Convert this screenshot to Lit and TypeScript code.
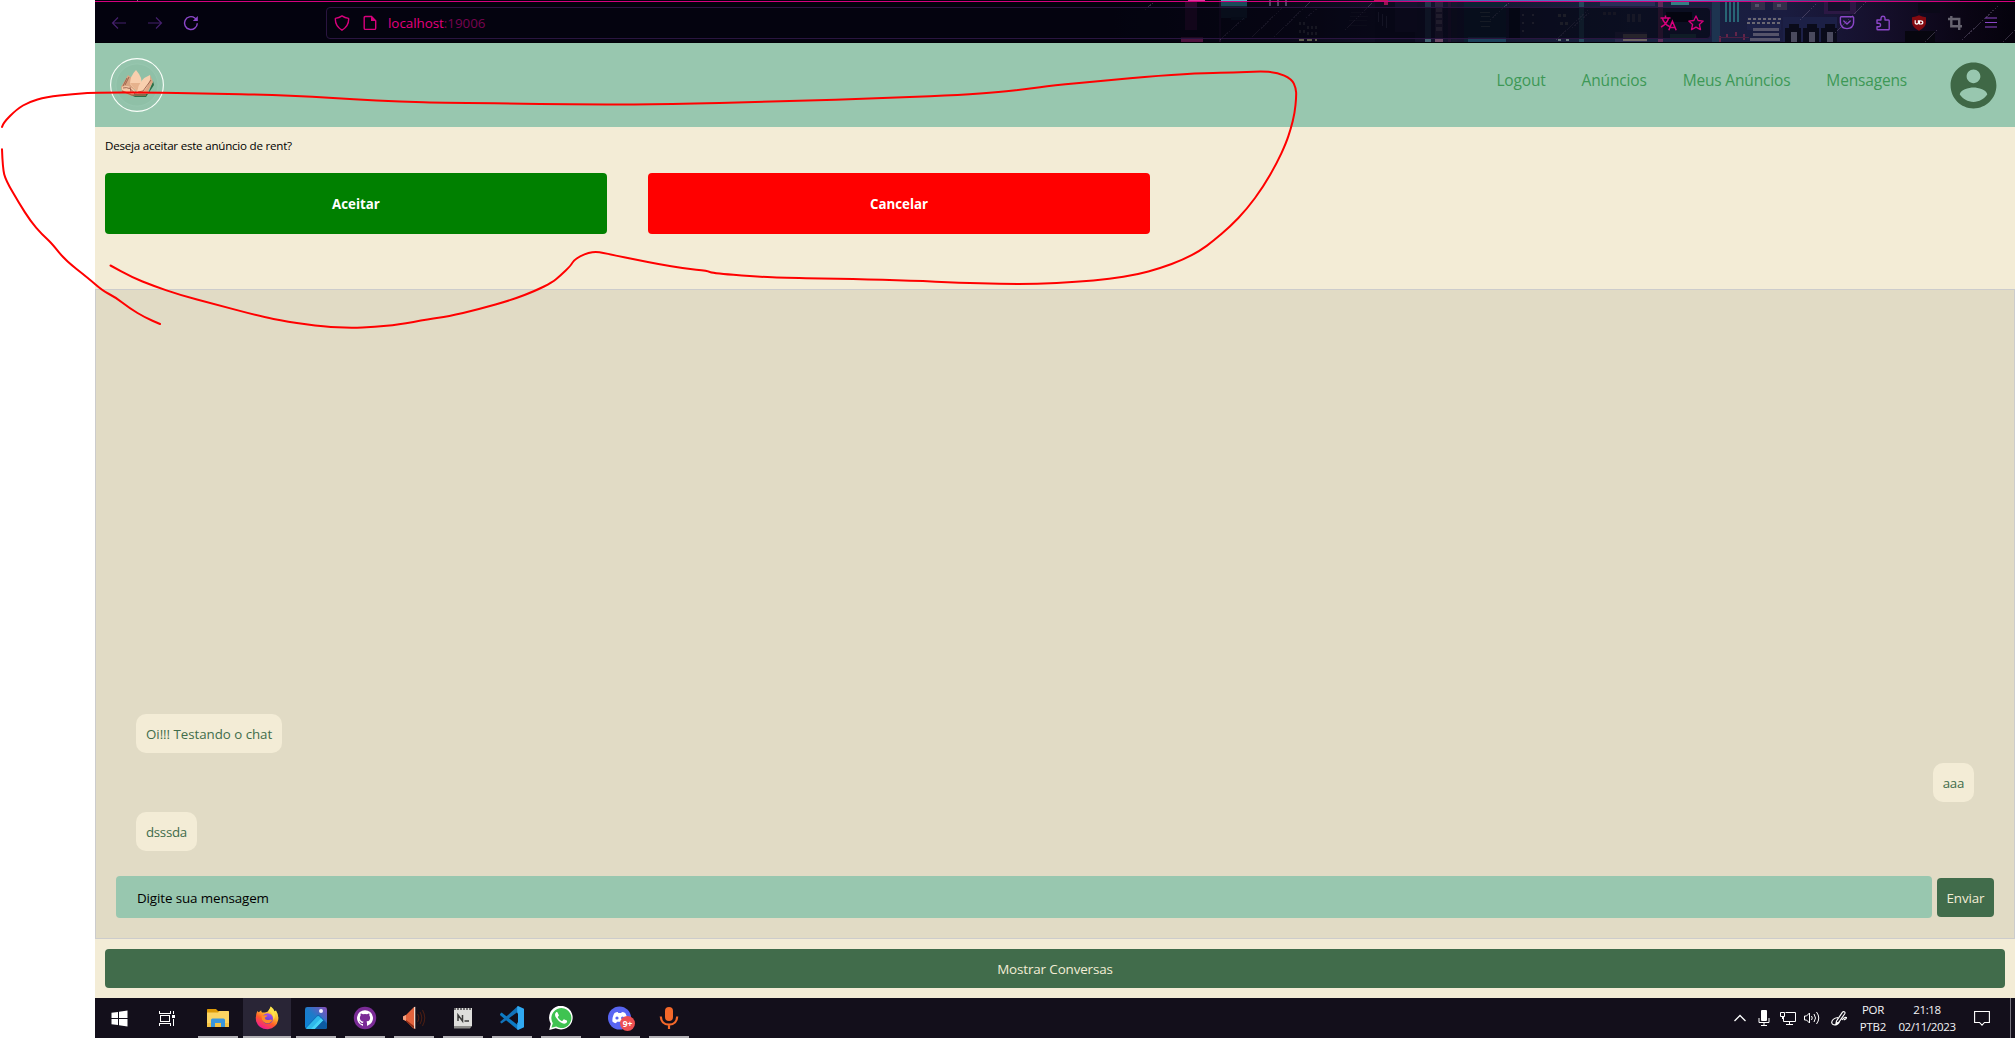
import { LitElement, html, css, svg } from "lit";
import { customElement } from "lit/decorators.js";

type Pt = [number, number];
type Block = [number, number, number, number, string];

/** Joins points through their midpoints so a freehand stroke looks smooth. */
function smooth(points: Pt[]): string {
  let d = `M${points[0][0]} ${points[0][1]}`;
  for (let i = 1; i < points.length - 1; i++) {
    const [x, y] = points[i];
    const [nx, ny] = points[i + 1];
    d += `Q${x} ${y} ${(x + nx) / 2} ${(y + ny) / 2}`;
  }
  const last = points[points.length - 1];
  return `${d}L${last[0]} ${last[1]}`;
}

const LOOP: Pt[] = [
  [2, 127], [3, 123], [17, 109], [29, 102], [46, 97], [73, 94], [96, 92.5], [165, 92.7], [215, 93.7],
  [267, 94.7], [313, 96.7], [353, 99.3], [400, 101.8], [447, 102.9], [600, 104.5], [668, 104.3], [771, 101.8],
  [900, 97.5], [960, 95], [1000, 92], [1027, 89], [1053, 85.3], [1100, 81], [1160, 75.5], [1207, 73], [1233, 72.7],
  [1260, 71.3], [1277, 72.3], [1291.7, 79], [1296, 88.3], [1296.3, 96.7], [1294.7, 113.3], [1290.7, 129],
  [1286, 143.3], [1276.7, 163.3], [1263.3, 186.7], [1246.7, 209.3], [1230, 226.7], [1213.3, 241], [1200, 250.7],
  [1183.3, 259.7], [1160, 268.3], [1136.7, 274.7], [1110, 279], [1076.7, 282], [1036.7, 283.9], [1000, 283.9],
  [960, 282.7], [911, 280.7], [854, 279], [788.6, 278], [756, 276.7], [711, 273], [708, 270.7], [684.5, 268.7],
  [658, 264], [637.6, 260], [613, 255], [603, 252.7], [596, 251.7], [588.6, 252.6], [580.4, 256], [573, 261],
  [571.4, 265], [560, 276], [552, 282.5], [536, 290.5], [513, 299.5], [478, 309.5], [448, 316.3], [429, 319.3],
  [398, 324.5], [375, 327], [350, 328], [325, 326.7], [287, 321.7], [260, 316.3], [214, 304], [180, 295],
  [153, 285.7], [132, 277.3], [110.5, 265.5],
];
const TAIL: Pt[] = [
  [2, 149.3], [2.7, 168.3], [5.7, 180], [19, 203], [30.6, 221.3], [42, 234.3], [51.7, 243.3], [65, 260], [88, 278],
  [103, 291], [115, 297], [130, 308.5], [145, 317.5], [160, 324],
];

const ART: Block[] = [
  [1185, 2, 12, 28, "#2c0a2c"], [1181, 37, 22, 5, "#4c123c"], [1188, 0, 17, 1, "#e0359c"], [1219, 0, 2, 42, "#1d0d28"],
  [1221, 0, 26, 1, "#58b8c8"], [1221, 2, 26, 4, "#1b4a5a"], [1221, 6, 26, 12, "#10222f"], [1231, 17, 14, 3, "#0b1826"],
  [1299, 22, 2, 3, "#3a3a40"], [1303, 22, 2, 3, "#3a3a40"], [1307, 26, 2, 3, "#3a3a40"], [1311, 26, 2, 3, "#3a3a40"], [1315, 26, 2, 3, "#3a3a40"],
  [1299, 30, 2, 3, "#3a3a40"], [1303, 30, 2, 3, "#3a3a40"], [1307, 32, 2, 3, "#3a3a40"], [1311, 32, 2, 3, "#3a3a40"], [1315, 32, 2, 3, "#3a3a40"],
  [1299, 38, 5, 3, "#5d5d4c"], [1307, 38, 5, 3, "#5d5d4c"], [1315, 38, 2, 3, "#5d5d4c"],
  [1269, 0, 2, 6, "#4c4560"], [1277, 0, 2, 6, "#4c4560"], [1285, 0, 2, 6, "#4c4560"],
  [1351, 12, 15, 1, "#1c1d2c"], [1350, 16, 18, 1, "#1c1d2c"], [1349, 20, 18, 1, "#1c1d2c"], [1350, 25, 17, 1, "#1c1d2c"],
  [1375, 2, 40, 40, "#0c0c20"], [1378, 12, 1, 10, "#33334b"], [1382, 14, 1, 12, "#33334b"], [1386, 16, 1, 12, "#33334b"],
  [1374, 0, 14, 1, "#b51857"], [1384, 2, 4, 3, "#9a1354"], [1395, 2, 22, 30, "#15132e"],
  [1425, 2, 6, 40, "#22344a"], [1435, 2, 8, 40, "#2c2440"], [1436, 8, 6, 4, "#574b60"], [1436, 14, 6, 4, "#574b60"],
  [1436, 20, 6, 4, "#574b60"], [1436, 27, 6, 4, "#574b60"], [1425, 38, 6, 4, "#426371"], [1435, 38, 8, 4, "#6b4966"],
  [1448, 2, 3, 40, "#251535"], [1452, 2, 5, 40, "#16182e"], [1464, 2, 42, 40, "#0c2233"], [1480, 12, 10, 1, "#3a474d"],
  [1481, 16, 9, 1, "#3a474d"], [1480, 21, 11, 1, "#3a474d"], [1481, 26, 9, 1, "#3a474d"], [1468, 37, 38, 5, "#1b405a"],
  [1509, 8, 11, 30, "#080d1c"], [1522, 14, 2, 2, "#4a4a58"], [1522, 22, 2, 2, "#4a4a58"], [1522, 30, 2, 2, "#4a4a58"],
  [1532, 14, 2, 2, "#4a4a58"], [1532, 22, 2, 2, "#4a4a58"], [1558, 14, 3, 3, "#4a4e52"], [1563, 14, 3, 3, "#4a4e52"],
  [1560, 22, 3, 3, "#4a4e52"], [1565, 22, 3, 3, "#4a4e52"],
  [1558, 38, 3, 3, "#64747a"], [1566, 38, 3, 3, "#64747a"], [1579, 2, 5, 40, "#24485a"], [1603, 12, 3, 3, "#3a3a48"],
  [1608, 12, 3, 3, "#3a3a48"], [1613, 12, 3, 3, "#3a3a48"], [1600, 2, 55, 4, "#2b2d58"],
  [1627, 14, 3, 8, "#3c3f50"], [1632, 14, 3, 8, "#3c3f50"], [1638, 14, 3, 8, "#3c3f50"], [1658, 2, 5, 40, "#5d2a58"],
  [1671, 2, 18, 3, "#377e85"], [1666, 12, 26, 10, "#05060f"], [1615, 32, 32, 10, "#29294b"], [1623, 34, 24, 7, "#6a6260"],
  [1670, 34, 26, 4, "#234b50"], [1712, 2, 8, 40, "#1d3450"], [1725, 2, 2, 20, "#286575"], [1729, 2, 2, 20, "#286575"],
  [1733, 2, 2, 20, "#286575"], [1737, 2, 2, 20, "#286575"], [1751, 2, 14, 8, "#322f4a"], [1755, 4, 4, 3, "#55516a"], [1773, 2, 14, 8, "#322f4a"],
  [1777, 4, 4, 3, "#55516a"], [1747, 17, 34, 13, "#1d2148"], [1753, 28, 26, 3, "#56546a"], [1753, 33, 26, 3, "#56546a"], [1750, 38, 30, 3, "#56546a"],
  [1719, 36, 2, 6, "#63254a"], [1726, 34, 2, 4, "#63254a"],
  [1735, 32, 2, 4, "#63254a"], [1743, 34, 2, 6, "#63254a"], [1719, 37, 30, 1, "#4b1f42"],
  [1783, 17, 54, 25, "#1c2046"],
  [1785, 28, 16, 14, "#0a0b1a"], [1789, 24, 10, 4, "#0a0b1a"],
  [1803, 28, 16, 14, "#0a0b1a"], [1807, 24, 10, 4, "#0a0b1a"],
  [1821, 28, 16, 14, "#0a0b1a"], [1825, 24, 10, 4, "#0a0b1a"],
  [1791, 32, 6, 10, "#4a4a5e"], [1809, 32, 6, 10, "#4a4a5e"], [1827, 32, 6, 10, "#4a4a5e"],
  [1824, 2, 32, 12, "#2c1844"], [1828, 2, 22, 9, "#14102c"], [1905, 31, 30, 11, "#07060f"], [1918, 3, 22, 10, "#0a0918"],
];
/** Dotted window rows: x, y, width. */
const DOTS: [number, number, number][] = [[1748, 19, 34], [1747, 23, 34]];
const GLINTS: Pt[][] = [
  [[1274, 37], [1310, 2]], [[1220, 40], [1244, 18]], [[1250, 39], [1282, 8]], [[1145, 10], [1154, 2]],
  [[1345, 30], [1372, 3]], [[1490, 20], [1510, 2]], [[1556, 40], [1588, 10]], [[1800, 20], [1816, 4]],
  [[1925, 42], [1938, 29]], [[1962, 40], [1998, 6]], [[1306, 18], [1320, 6]], [[2003, 42], [2015, 30]],
  [[1572, 28], [1590, 12]], [[1835, 33], [1866, 2]],
];

const backdrop = html`<svg class="backdrop" viewBox="95 0 1920 43" preserveAspectRatio="none" shape-rendering="crispEdges">
  <defs>
    <linearGradient id="sky" gradientUnits="userSpaceOnUse" x1="95" x2="2015" y1="0" y2="0">
      <stop offset="0" stop-color="#03020e" /><stop offset=".53" stop-color="#03020e" />
      <stop offset=".62" stop-color="#0a0818" /><stop offset=".7" stop-color="#14142e" />
      <stop offset=".8" stop-color="#182340" /><stop offset=".88" stop-color="#1a1c40" />
      <stop offset=".93" stop-color="#150f2b" /><stop offset=".975" stop-color="#0a0514" /><stop offset="1" stop-color="#04020c" />
    </linearGradient>
    <linearGradient id="edge" gradientUnits="userSpaceOnUse" x1="1300" x2="1960" y1="0" y2="0">
      <stop offset="0" stop-color="#241c48" /><stop offset=".25" stop-color="#4a6eb8" />
      <stop offset=".6" stop-color="#5b7cc0" /><stop offset="1" stop-color="#1b1230" />
    </linearGradient>
  </defs>
  <rect x="95" width="1920" height="43" fill="url(#sky)" />
  <rect x="1380" width="580" height="1" fill="url(#edge)" />
  ${ART.map(([x, y, w, h, c]) => svg`<rect x=${x} y=${y} width=${w} height=${h} fill=${c} />`)}
  ${DOTS.map(([x, y, w]) => svg`<path d="M${x} ${y}h${w}" stroke="#6b6872" stroke-width="2" stroke-dasharray="3 2" />`)}
  ${GLINTS.map(([a, b]) => svg`<path d="M${a[0]} ${a[1]}L${b[0]} ${b[1]}" stroke="#8a7a9a" stroke-opacity=".35" stroke-dasharray="2 1" />`)}
  <rect x="95" y="1" width="1920" height="1" fill="#d4007d" />
  <rect x="137" width="1" height="1" fill="#777" />
  <rect x="95" y="42" width="1920" height="1" fill="#020108" />
</svg>`;

const arrow = (flip: boolean) => html`<svg width="16" height="16" viewBox="0 0 16 16" fill="none" stroke="#45206c" stroke-width="1.2">
  <path d=${flip ? "M1 8H14.5M9 2.5L14.5 8L9 13.5" : "M15 8H1.5M7 2.5L1.5 8L7 13.5"} />
</svg>`;

const lotus = html`<svg class="brand" viewBox="0 0 54 54">
  <circle cx="27" cy="27" r="26.4" fill="#93c3ab" stroke="#fbfffb" stroke-width="1.1" />
  <circle cx="27" cy="27" r="21" fill="#8fc0a7" stroke="#9ccab4" stroke-width=".5" />
  <path d="M12 32L19 36L25 39H36L44 27L43 23L38 36H22Z" fill="#2c6c45" />
  <path d="M11 29L18 17L22 20L25 35L22 38L12 34Z" fill="#d9a582" />
  <path d="M12 29Q19 26 25 33L24 37L12 32Z" fill="#f4c9a8" />
  <path d="M17 20L13 28M19 19L15 27" stroke="#8f513e" stroke-width=".8" />
  <path d="M26 12Q33 20 31 26L27 34L20 26Q20 18 26 12Z" fill="#f8cfae" />
  <path d="M20 25L27 34L31 25Z" fill="#e6b28d" />
  <path d="M27 34Q29 21 40 17Q42 22 35 33L27 36Z" fill="#f8cfae" />
  <path d="M40 17L43 24L37 35L26 36L35 32Q41 24 40 17Z" fill="#dda583" />
  <path d="M28 34L33 33L41 22M13 30Q20 28 25 36M21 34L20 29" fill="none" stroke="#8f513e" stroke-width=".8" />
  <path d="M12 33L22 37H36" fill="none" stroke="#a66a4d" stroke-width="1.3" />
</svg>`;

interface Task { name: string; icon: unknown; active?: boolean; shift?: boolean }

const TASKS: Task[] = [
  { name: "Explorador", icon: html`<svg viewBox="0 0 24 24"><path d="M1 3.5Q1 3 1.7 3H10L12 5H22Q23 5 23 6V20H1Z" fill="#dd9a08" /><path d="M1 6.5H12L13.5 5H22Q23 5 23 6V20.5H1Z" fill="#fcd462" /><path d="M1 17H23V21H1Z" fill="#f6c344" /><path d="M5 21V14Q5 12.5 6.5 12.5H17.5Q19 12.5 19 14V21H15V17H9V21Z" fill="#3a96dd" /></svg>` },
  { name: "Firefox", active: true, icon: html`<svg viewBox="0 0 24 24">
    <defs><linearGradient id="fox" x1=".8" y1=".1" x2=".3" y2="1"><stop offset="0" stop-color="#fff44f" /><stop offset=".35" stop-color="#ffb02c" /><stop offset=".62" stop-color="#ff5a2a" /><stop offset="1" stop-color="#f0149c" /></linearGradient>
    <linearGradient id="globe" x1=".6" y1="0" x2=".3" y2="1"><stop offset="0" stop-color="#a550f2" /><stop offset="1" stop-color="#4a37c4" /></linearGradient></defs>
    <path d="M2.3 5Q3 6 3.8 6.3Q5 5 6.2 4.2Q6.2 5.6 7 6.5H10Q13 6 14 4Q15.5 2.5 15.8.5Q18.5 2.5 19.5 5.2L21 4.4Q24 9 23.2 14Q21.5 22 13 23.2Q4 23.5 1.2 15.5Q0 10 2.3 5Z" fill="url(#fox)" />
    <circle cx="12.6" cy="12.5" r="5.3" fill="url(#globe)" />
    <path d="M6.8 10Q9 8.5 12.5 9.6Q11.8 11.2 9.8 11.6Q10 14.6 14 14Q16.5 13 17.2 14.2Q15.5 17.8 11 17.2Q6 15.5 6.8 10Z" fill="#ff8a28" />
    <path d="M13.5 4.8Q18.8 7.6 18.3 14Q20.8 11 19.5 6.2Q17.8 5.4 15.8.5Z" fill="#ffe04a" /></svg>` },
  { name: "Fotos", icon: html`<svg viewBox="0 0 24 24"><defs><linearGradient id="ph" x1="0" y1="1" x2="1" y2="0"><stop offset="0" stop-color="#0a82d6" /><stop offset=".5" stop-color="#1d7bc9" /><stop offset="1" stop-color="#8b4cb8" /></linearGradient></defs><rect x="1" y="1" width="22" height="22" rx="2.4" fill="url(#ph)" /><circle cx="17" cy="5" r="2" fill="#f4f2ff" /><path d="M1.5 22L13 9.4Q14.3 8.2 15.6 9.4L23 17V21Q23 23 21 23H3Q1.8 23 1.5 22Z" fill="#0f6cb6" /><path d="M2 22.3L13 10.4Q14.3 9.4 15.6 10.8L17.6 13L8.5 23H3Z" fill="#2fb8ea" /><path d="M17 12.2L19.3 14.4L11 23H7Z" fill="#45d3f5" /><path d="M19.3 14.4L23 18V21Q23 23 21 23H11Z" fill="#0c5ba2" /></svg>` },
  { name: "GitHub", icon: html`<svg viewBox="0 0 24 24"><circle cx="12" cy="12" r="11.2" fill="#7a2b96" /><path d="M12 4.2A8 8 0 0 0 9.5 19.8C9.9 19.9 10 19.6 10 19.4V17.9C7.8 18.4 7.3 17 7.3 17C6.9 16.1 6.4 15.8 6.4 15.8C5.7 15.3 6.5 15.3 6.5 15.3C7.3 15.4 7.7 16.1 7.7 16.1C8.4 17.3 9.6 17 10 16.8C10.1 16.3 10.3 15.9 10.6 15.7C8.8 15.5 6.9 14.8 6.9 11.8C6.9 10.9 7.2 10.2 7.7 9.6C7.6 9.4 7.4 8.6 7.8 7.5C7.8 7.5 8.5 7.3 10 8.3A7.5 7.5 0 0 1 14 8.3C15.5 7.3 16.2 7.5 16.2 7.5C16.6 8.6 16.4 9.4 16.3 9.6C16.8 10.2 17.1 10.9 17.1 11.8C17.1 14.8 15.2 15.5 13.4 15.7C13.7 15.9 14 16.4 14 17.2V19.4C14 19.6 14.1 19.9 14.5 19.8A8 8 0 0 0 12 4.2Z" fill="#fff" /></svg>` },
  { name: "Som", icon: html`<svg viewBox="0 0 24 24"><path d="M1 10.5L4 9L12 1L13 1V23L11 22L4 15L1 13.5Z" fill="#e2623c" /><path d="M12 1L13.3.7V23L12 22Z" fill="#f4d6c8" /><path d="M1 10.5L4 9V15L1 13.5Z" fill="#f3a080" /><path d="M4 14L12 20V22.5L4 15.5Z" fill="#8c2e18" /><path d="M15.5 8Q18 12 15.5 16M18 6Q21.5 12 18 18M20.5 4Q25 12 20.5 20" fill="none" stroke="#4a1e14" stroke-width="1.1" /></svg>` },
  { name: "Notas", icon: html`<svg viewBox="0 0 24 24"><rect x="3" y="2" width="18" height="18" fill="#dededc" /><path d="M3 20H21L19 22.5H3Z" fill="#8c8c8a" /><path d="M4 2V4M7 2V4M10 2V4M13 2V4M16 2V4M19 2V4" stroke="#26232a" stroke-width="1.2" /><path d="M7 15V9L11.5 15V9M13.5 15H18" fill="none" stroke="#3a3a3a" stroke-width="1.5" /></svg>` },
  { name: "VS Code", icon: html`<svg viewBox="0 0 24 24"><path d="M0 8L1.6 6.6L19 20L18 24L.2 9.3Z" fill="#0c7bc4" /><path d="M0 16L18 .1L19 5L1.6 17.5Z" fill="#1273ba" /><path d="M18 0L24 2.8V21.2L18 24L17.2 23.2V.8Z" fill="#30a9f2" /><path d="M18 7L11.5 12L18 17Z" fill="#130f1b" /></svg>` },
  { name: "WhatsApp", icon: html`<svg viewBox="0 0 24 24"><path d="M.2 24L1.8 17.8A11.8 11.8 0 1 1 6.8 22.3Z" fill="#fff" /><path d="M2.4 21.8L3.8 17.2A10 10 0 1 1 7.2 20.6Z" fill="#3fc351" /><path d="M8.5 6.4C8.2 5.9 7.4 6 7 6.4C5.6 7.8 5.8 9.8 7 11.6C8.7 14.3 10.6 16.2 13.4 17.3C15.4 18.1 17.2 17.5 17.9 16.2C18.2 15.4 18.1 14.8 17.8 14.6L15.3 13.4C14.9 13.3 14.7 13.4 14.4 13.7L13.5 14.8C13.2 15.1 13 15.1 12.6 14.9C10.9 14.1 9.8 13 8.9 11.4C8.8 11 8.9 10.9 9.1 10.6L9.8 9.7C9.9 9.5 9.9 9.2 9.8 9Z" fill="#fff" /></svg>` },
  { name: "Discord", shift: true, icon: html`<svg viewBox="0 0 24 24"><circle cx="11.5" cy="12" r="11.5" fill="#5865f2" /><path d="M6.5 7Q8.3 6.1 9.8 6L10.3 7H13.3L13.8 6Q15.6 6.2 17.2 7Q19.6 10.6 19.3 15.4Q17.5 16.8 15.6 17.2L14.7 15.7H9L8 17.2Q6 16.8 4.4 15.4Q4.1 10.6 6.5 7Z" fill="#fff" /><circle cx="9" cy="12" r="1.6" fill="#5865f2" /><circle cx="14.6" cy="12" r="1.6" fill="#5865f2" /></svg><span class="badge">9+</span>` },
  { name: "Microfone", icon: html`<svg viewBox="0 0 24 24"><rect x="8" y="1" width="8" height="14" rx="4" fill="#f4682a" /><path d="M3.8 10.5Q4.2 18.5 12 18.7Q19.8 18.5 20.2 10.5M12 18.7V23" fill="none" stroke="#f4682a" stroke-width="2.2" /></svg>` },
];

const base = css`
  * { box-sizing: border-box; }
  svg { display: block; flex: none; }
`;

@customElement("browser-bar")
export class BrowserBar extends LitElement {
  static styles = [base, css`
    :host { display: block; height: 43px; position: relative; overflow: hidden; background: #03020e; }
    .backdrop { position: absolute; inset: 0; width: 100%; height: 43px; }
    .bar { position: relative; display: flex; align-items: center; height: 43px; padding: 2px 16px 0 16px; }
    .controls { display: flex; gap: 20px; width: 215px; flex: none; }
    .address { display: flex; align-items: center; height: 32px; flex: 1; border: 1px solid #2a1540; border-radius: 4px; background: rgba(5, 4, 16, .66); padding: 0 6px 0 7px; }
    .page { margin-left: 12px; }
    .url { margin-left: 10px; flex: 1; font: 13.4px/20px "Open Sans", sans-serif; color: #e4007f; letter-spacing: -.03px; }
    .url .port { color: #780450; }
    .star { margin-left: 11px; }
    .tools { display: flex; gap: 20px; flex: none; margin-left: 128px; }
  `];
  render() {
    return html`${backdrop}
      <div class="bar">
        <div class="controls">
          ${arrow(false)}${arrow(true)}
          <svg width="16" height="16" viewBox="0 0 16 16" fill="none" stroke="#8b46c8" stroke-width="1.4"><path d="M14.3 8.2A6.4 6.4 0 1 1 11.8 3L13.6 4.4" /><path d="M14.8 1V6H9.8Z" fill="#8b46c8" stroke="none" /></svg>
        </div>
        <div class="address">
          <svg width="16" height="16" viewBox="0 0 16 16" fill="none" stroke="#d8007c" stroke-width="1.4"><path d="M8 .9Q10.8 3 14.6 3.4Q15.2 10.8 8 15.2Q.8 10.8 1.4 3.4Q5.2 3 8 .9Z" stroke-linejoin="round" /></svg>
          <svg class="page" width="16" height="16" viewBox="0 0 16 16"><path d="M3.4 1.5H9.5L13.7 5.7V13.2Q13.7 14.4 12.5 14.4H3.4Q2.2 14.4 2.2 13.2V2.7Q2.2 1.5 3.4 1.5Z" fill="none" stroke="#d8007c" stroke-width="1.4" /><path d="M9 1.5V6H13.8Z" fill="#d8007c" /></svg>
          <span class="url">localhost<span class="port">:19006</span></span>
          <svg width="17" height="16" viewBox="0 0 17 16" fill="none" stroke="#d8007c" stroke-width="1.5"><path d="M.5 3H10.5M5.5.5V3M2.3 3Q4 9 9.5 11.5M8.6 3Q7 9 1 12M8.8 15.3L12.4 6.2L16.2 15.3M10 12.4H15" /></svg>
          <svg class="star" width="16" height="16" viewBox="0 0 16 16" fill="none" stroke="#d8007c" stroke-width="1.3" stroke-linejoin="round"><path d="M8 .9L10.1 5.5L15.2 6.1L11.4 9.5L12.5 14.6L8 12.1L3.5 14.6L4.6 9.5L.8 6.1L5.9 5.5Z" /></svg>
        </div>
        <div class="tools">
          <svg width="16" height="16" viewBox="0 0 16 16" fill="none" stroke="#8b46c8" stroke-width="1.4" stroke-linecap="round" stroke-linejoin="round"><path d="M2.2 1.8H13.8Q14.6 1.8 14.6 2.6V7.6Q14.2 13.2 8 13.6Q1.8 13.2 1.4 7.6V2.6Q1.4 1.8 2.2 1.8ZM4.8 6L8 9L11.2 6" /></svg>
          <svg width="16" height="16" viewBox="0 0 16 16" fill="none" stroke="#8b46c8" stroke-width="1.4" stroke-linejoin="round"><path d="M2 5H6V3Q6.2 1.2 8 1.2Q9.8 1.2 10 3V5H13.4Q14.2 5 14.2 5.8V14Q14.2 14.8 13.4 14.8H2.8Q2 14.8 2 14V11.7H4Q5.6 11.5 5.6 10Q5.6 8.6 4 8.3H2Z" /></svg>
          <svg width="16" height="16" viewBox="0 0 16 16"><path d="M8 .3Q11 2 15 2.2V8Q14.5 12.5 8 15.8Q1.5 12.5 1 8V2.2Q5 2 8 .3Z" fill="#820a10" /><path d="M4.2 5.3V8.2Q5.7 10.2 7.4 8.2V5.3M8.4 9V5.9H9.5Q11.8 6 11.8 7.4Q11.8 9 9.5 9Z" fill="none" stroke="#fff" stroke-width="1.2" /></svg>
          <svg width="16" height="16" viewBox="0 0 16 16" fill="none" stroke="#66636f" stroke-width="2.4"><path d="M4.3 1V11.3H11M1 4H12.2V15M10 11.3H15" /></svg>
          <svg width="16" height="16" viewBox="0 0 16 16" stroke="#8b46c8" stroke-width="1.2"><path d="M2 3H14M2 7.5H14M2 12H14" /></svg>
        </div>
      </div>`;
  }
}

@customElement("site-header")
export class SiteHeader extends LitElement {
  static styles = [base, css`
    :host { display: flex; align-items: center; height: 84px; padding: 0 14.5px 0 15px; background: #98c7af; }
    .brand { width: 54px; height: 54px; }
    nav { display: flex; gap: 36px; margin: 0 38.5px 11px auto; font: 15.5px/22px "Open Sans", sans-serif; letter-spacing: -.17px; color: #3d9856; }
    .account { width: 55px; height: 55px; }
  `];
  render() {
    return html`${lotus}
      <nav>${["Logout", "Anúncios", "Meus Anúncios", "Mensagens"].map((t) => html`<span>${t}</span>`)}</nav>
      <svg class="account" viewBox="0 0 24 24"><path fill="#3f6846" d="M12 2C6.48 2 2 6.48 2 12s4.48 10 10 10 10-4.48 10-10S17.52 2 12 2zm0 3c1.66 0 3 1.34 3 3s-1.34 3-3 3-3-1.34-3-3 1.34-3 3-3zm0 14.2c-2.5 0-4.71-1.28-6-3.22.03-1.99 4-3.08 6-3.08 1.99 0 5.97 1.09 6 3.08-1.29 1.94-3.5 3.22-6 3.22z" /></svg>`;
  }
}

@customElement("chat-page")
export class ChatPage extends LitElement {
  static styles = [base, css`
    :host { display: flex; flex-direction: column; flex: 1; min-height: 0; background: #f3ecd6; font: 13.4px/19px "Open Sans", sans-serif; letter-spacing: -.12px; }
    .ask { height: 162px; padding: 10px; display: flex; flex-direction: column; gap: 18px; }
    .question { font-size: 11.6px; line-height: 18px; letter-spacing: -.23px; color: #000; }
    .choices { display: flex; gap: 41px; }
    .choice { width: 502px; height: 61px; padding-top: 2px; border-radius: 4px; display: flex; align-items: center; justify-content: center; color: #fff; font-weight: 700; font-size: 13.3px; letter-spacing: 0; }
    .accept { background: #008000; }
    .cancel { background: #f00; }
    .chat { height: 650px; border: 1px solid #ccc; background: #e1dbc5; display: flex; flex-direction: column; justify-content: flex-end; padding: 20px; }
    .messages { display: flex; flex-direction: column; gap: 10px; padding: 0 20px; margin-bottom: 25px; }
    .bubble { align-self: flex-start; background: #f3ecd6; color: #416c4b; border-radius: 10px; padding: 11px 10px 9px; height: 39px; font-size: 13.3px; letter-spacing: -.03px; }
    .short { letter-spacing: -.3px; }
    .mine { align-self: flex-end; }
    .compose { display: flex; align-items: center; gap: 5px; }
    .field { flex: 1; height: 42px; border-radius: 4px; background: #98c7af; color: #000; padding: 2px 21px 0; display: flex; align-items: center; }
    .send { width: 57px; height: 39px; padding-top: 1px; margin-top: 1px; border-radius: 4px; background: #416c4b; color: #f3ecd6; display: flex; align-items: center; justify-content: center; }
    .toggle { margin: 10px; height: 39px; padding-top: 2px; border-radius: 4px; background: #416c4b; color: #f3ecd6; display: flex; align-items: center; justify-content: center; }
  `];
  render() {
    return html`
      <section class="ask">
        <div class="question">Deseja aceitar este anúncio de rent?</div>
        <div class="choices"><div class="choice accept">Aceitar</div><div class="choice cancel">Cancelar</div></div>
      </section>
      <section class="chat">
        <div class="messages">
          <div class="bubble">Oi!!! Testando o chat</div>
          <div class="bubble short mine">aaa</div>
          <div class="bubble short">dsssda</div>
        </div>
        <div class="compose"><div class="field">Digite sua mensagem</div><div class="send">Enviar</div></div>
      </section>
      <div class="toggle">Mostrar Conversas</div>`;
  }
}

@customElement("task-bar")
export class TaskBar extends LitElement {
  static styles = [base, css`
    :host { display: flex; height: 40px; background: #130f1b; color: #f4f4f6; font: 11.5px/17.4px "Open Sans", sans-serif; }
    .system { width: 48px; display: flex; align-items: center; justify-content: center; }
    .tasks { display: flex; gap: 1px; margin-left: 3px; }
    .task { position: relative; width: 48px; display: flex; flex-direction: column; align-items: center; }
    .task svg { width: 24px; height: 24px; margin-top: 8px; }
    .task::after { content: ""; width: 40px; height: 2px; margin-top: 6px; background: #b3b1b6; }
    .active { background: #292536; }
    .active::after { width: 48px; }
    .shift { margin-left: 10px; }
    .badge { position: absolute; left: 24px; top: 18px; width: 15px; height: 15px; border-radius: 50%; background: #ee4f52; color: #fff; font: 700 8.5px/15px "Open Sans", sans-serif; text-align: center; }
    .tray { display: flex; align-items: center; margin-left: auto; }
    .tray > svg { width: 16px; height: 18px; margin-right: 8px; }
    .tray > .pen { margin-left: 3px; }
    .stack { text-align: center; letter-spacing: -.25px; height: 35px; }
    .lang { width: 30px; margin-left: 3px; }
    .clock { width: 64px; margin: 0 15px 0 7px; letter-spacing: -.38px; }
    .peek { width: 1px; height: 40px; background: #77747e; margin: 0 4px 0 12px; }
  `];
  render() {
    return html`
      <div class="system"><svg width="17" height="17" viewBox="0 0 17 17" fill="#fff"><path d="M.5 2.8L7 1.9V8H.5ZM8 1.7L16.5.5V8H8ZM.5 9H7V15.1L.5 14.2ZM8 9H16.5V16.5L8 15.3Z" /></svg></div>
      <div class="system"><svg width="17" height="17" viewBox="0 0 17 17" fill="none" stroke="#fff" stroke-width="1.1" shape-rendering="crispEdges"><path d="M.5 1V3.5H11.5V1M1.5 5.5H10.5V11.5H1.5ZM.5 16V13.5H11.5V16M14.5 1V4M14.5 9V16" /><rect x="13.5" y="5.5" width="2" height="2" fill="#fff" /></svg></div>
      <div class="tasks">
        ${TASKS.map((t) => html`<div class="task ${t.active ? "active" : ""} ${t.shift ? "shift" : ""}">${t.icon}</div>`)}
      </div>
      <div class="tray">
        <svg viewBox="0 0 16 18" fill="none" stroke="#fff" stroke-width="1.3"><path d="M2.5 12L8 6.5L13.5 12" /></svg>
        <svg viewBox="0 0 16 18"><rect x="5" y="1" width="6" height="11" rx="1" fill="#fff" /><path d="M3 9V13.5H13V9M8 13.5V16.5M5 16.5H11" fill="none" stroke="#fff" /></svg>
        <svg viewBox="0 0 16 18" fill="none" stroke="#fff"><path d="M5.5 3.5H15.5V12.5H3.5V8M.5 3.5H4.5V7.5H.5ZM9.5 12.5V15.5M6 15.5H13M2.5 7.5V10" /></svg>
        <svg viewBox="0 0 16 18" fill="none" stroke="#fff"><path d="M.5 7H2.5L5.5 4V14L2.5 11H.5ZM7.5 7Q9 9 7.5 11M10 5Q13 9 10 13M12.5 3Q17 9 12.5 15" /></svg>
        <svg class="pen" viewBox="0 0 16 18" fill="none" stroke="#fff" stroke-width="1.2"><path d="M5.5 12L11.5 3.2Q12.5 2 13.6 2.9Q14.4 3.8 13.6 5L8 13L5 14.6ZM7 8.5Q1 9.5 .7 13.5Q1.2 16.5 5 15.8Q8 15 8.5 12.5M11 11Q13.5 7.6 15.5 8.6Q15.5 10 12.8 10.8" /></svg>
        <div class="stack lang"><div>POR</div><div>PTB2</div></div>
        <div class="stack clock"><div>21:18</div><div>02/11/2023</div></div>
        <svg viewBox="0 0 16 18" fill="none" stroke="#fff" stroke-width="1.1"><path d="M.6 2.5H15.4V13.5H10.5L8 16.2L5.5 13.5H.6Z" /></svg>
        <div class="peek"></div>
      </div>`;
  }
}

@customElement("app-root")
export class AppRoot extends LitElement {
  static styles = [base, css`
    :host { display: block; position: relative; width: 2015px; height: 1038px; overflow: hidden; background: #fff; padding-left: 95px; box-sizing: border-box; }
    .screen { display: flex; flex-direction: column; height: 1038px; }
    .ink { position: absolute; left: 0; top: 0; pointer-events: none; }
  `];
  render() {
    return html`
      <div class="screen">
        <browser-bar></browser-bar>
        <site-header></site-header>
        <chat-page></chat-page>
        <task-bar></task-bar>
      </div>
      <svg class="ink" width="2015" height="1038" viewBox="0 0 2015 1038" fill="none" stroke="#f00" stroke-width="2" stroke-linecap="round">
        <path d=${smooth(LOOP)} /><path d=${smooth(TAIL)} />
      </svg>`;
  }
}
